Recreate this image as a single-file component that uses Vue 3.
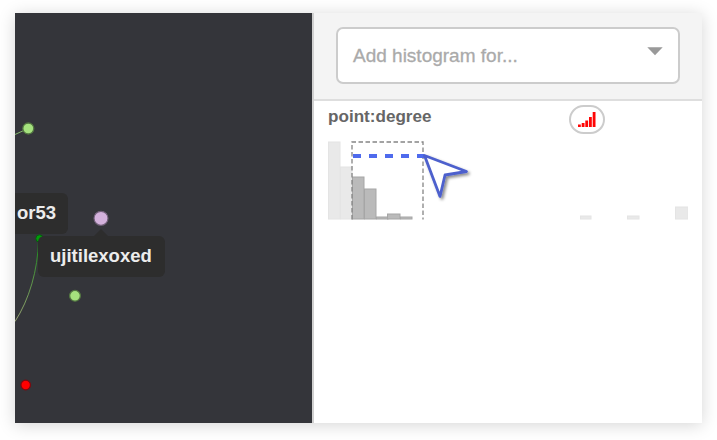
<script setup>
const bars = [
  { x: 0, h: 78, w: 12, faded: true },
  { x: 12, h: 53, w: 12, faded: true },
  { x: 24, h: 43, w: 12 },
  { x: 36, h: 31, w: 12 },
  { x: 48, h: 3, w: 12 },
  { x: 59, h: 6, w: 13 },
  { x: 72, h: 3, w: 12 },
  { x: 252, h: 4, w: 11, faded: true },
  { x: 299, h: 4, w: 12, faded: true },
  { x: 347, h: 13, w: 13, faded: true },
]
const signal = [
  { x: 0, h: 2.5 },
  { x: 3.7, h: 4 },
  { x: 7.3, h: 6.5 },
  { x: 11, h: 10 },
  { x: 14.7, h: 15 },
]
</script>

<template>
  <main class="window">
    <section class="graph">
      <svg class="network" width="297" height="410" viewBox="15 13 297 410">
        <path d="M15 134.500L28 128.500" fill="none" stroke="#84b66c" />
        <path d="M38.500 240C38 270 29 300 15 321.500" fill="none" stroke="url(#edge)" />
        <defs>
          <linearGradient id="edge" x1="0" y1="240" x2="0" y2="322" gradientUnits="userSpaceOnUse">
            <stop offset="0" stop-color="#128c16" />
            <stop offset="0.5" stop-color="#5c9548" />
            <stop offset="1" stop-color="#9aa575" />
          </linearGradient>
        </defs>
        <circle cx="28.300" cy="128.500" r="5.500" fill="#a5e27e" stroke="#527541" stroke-width="1.300" />
        <circle cx="101" cy="218.300" r="7" fill="#d3b1dc" stroke="#705f77" stroke-width="1.200" />
        <circle cx="75" cy="295.800" r="5.400" fill="#a5e27e" stroke="#527541" stroke-width="1.300" />
        <circle cx="39.500" cy="238.500" r="3.700" fill="#009d08" stroke="#075b10" />
        <circle cx="25.700" cy="385" r="4.800" fill="#ff0000" stroke="#7b0a10" stroke-width="1.300" />
      </svg>
      <div class="label label-a">or53</div>
      <div class="label label-b">ujitilexoxed</div>
    </section>
    <aside class="panel">
      <header class="toolbar">
        <div class="select">
          <span>Add histogram for...</span>
          <svg class="caret" width="16" height="9" viewBox="0 0 16 9"><path d="M.3.300H15.700L8 8.300Z" fill="#999" /></svg>
        </div>
      </header>
      <div class="heading">
        <h2>point:degree</h2>
        <button class="pill" aria-label="Histogram options">
          <svg width="18" height="15" viewBox="0 0 18 15">
            <rect v-for="s in signal" :key="s.x" :x="s.x" :y="15 - s.h" width="2.800" :height="s.h" fill="#ff0505" />
          </svg>
        </button>
      </div>
      <svg class="chart" width="374" height="90" viewBox="0 0 374 90">
        <defs>
          <filter id="soft" x="-30%" y="-30%" width="170%" height="170%">
            <feDropShadow dx="2" dy="2" stdDeviation="1.500" flood-color="#000" flood-opacity="0.45" />
          </filter>
        </defs>
        <g v-for="b in bars" :key="b.x" :class="{ faded: b.faded }">
          <rect class="bar" :x="b.x + 14.500" :y="85 - b.h" :width="b.w - 0.500" :height="b.h - 1" />
        </g>
        <path d="M38 84.500V7H109V84.500" fill="none" stroke="#858585" stroke-width="1.300" stroke-dasharray="4.500 2.500" />
        <path d="M39 21H110" stroke="#4f6bed" stroke-width="4" stroke-dasharray="8 8" />
        <path d="M110.500 20.500L152.500 36.500L131 40L126 61.500Z" fill="#fff" stroke="#4d61cd" stroke-width="2.800" stroke-linejoin="round" filter="url(#soft)" />
      </svg>
    </aside>
  </main>
</template>

<style>
body {
  margin: 0;
  background: #fff;
}
</style>

<style scoped>
.window {
  box-sizing: border-box;
  width: 687px;
  height: 410px;
  margin: 13px 15px 17px;
  display: flex;
  background: #fff;
  box-shadow: 0 2px 16px rgba(0, 0, 0, 0.17);
  font-family: "Liberation Sans", Arial, sans-serif;
}
.graph {
  position: relative;
  width: 297px;
  overflow: hidden;
  background: #34353a;
}
.network {
  display: block;
}
.label {
  position: absolute;
  box-sizing: border-box;
  height: 41px;
  border-radius: 6px;
  background: #2d2d2d;
  color: #ececec;
  font-size: 18.500px;
  font-weight: 700;
  line-height: 39px;
  white-space: nowrap;
}
.label-a {
  top: 180px;
  left: -19px;
  width: 72px;
  padding-right: 12px;
  text-align: right;
}
.label-b {
  top: 223px;
  left: 23px;
  width: 127px;
  padding-left: 12px;
}
.label-b::before {
  content: "";
  position: absolute;
  top: -7px;
  left: 56px;
  border: solid transparent;
  border-width: 0 7px 7px;
  border-bottom-color: #2d2d2d;
}
.panel {
  box-sizing: border-box;
  width: 390px;
  border-left: 2px solid #d0d0d0;
}
.toolbar {
  box-sizing: border-box;
  height: 88px;
  padding: 14px 22px 0;
  border-bottom: 2px solid #dedede;
  background: #f4f4f4;
}
.select {
  box-sizing: border-box;
  height: 57px;
  display: flex;
  align-items: center;
  justify-content: space-between;
  padding: 0 15px;
  border: 2px solid #ccc;
  border-radius: 7px;
  background: #fff;
  color: #aaa;
  font-size: 19px;
  -webkit-text-stroke: 0.300px #aaa;
}
.caret {
  margin-top: -9px;
}
.heading {
  height: 34px;
  display: flex;
  align-items: flex-start;
  padding-left: 14px;
}
h2 {
  width: 241px;
  margin: 6px 0 0;
  color: #666;
  font-size: 17.100px;
  line-height: 20px;
}
.pill {
  box-sizing: border-box;
  width: 36px;
  height: 29px;
  display: flex;
  align-items: center;
  justify-content: center;
  margin: 4px 0 0;
  padding: 0;
  border: 2px solid #ccc;
  border-radius: 15px;
  background: #fff;
}
.chart {
  display: block;
}
.bar {
  fill: #bababa;
  stroke: #a6a6a6;
}
.faded .bar {
  fill: #e9e9e9;
  stroke: #e4e4e4;
}
</style>
